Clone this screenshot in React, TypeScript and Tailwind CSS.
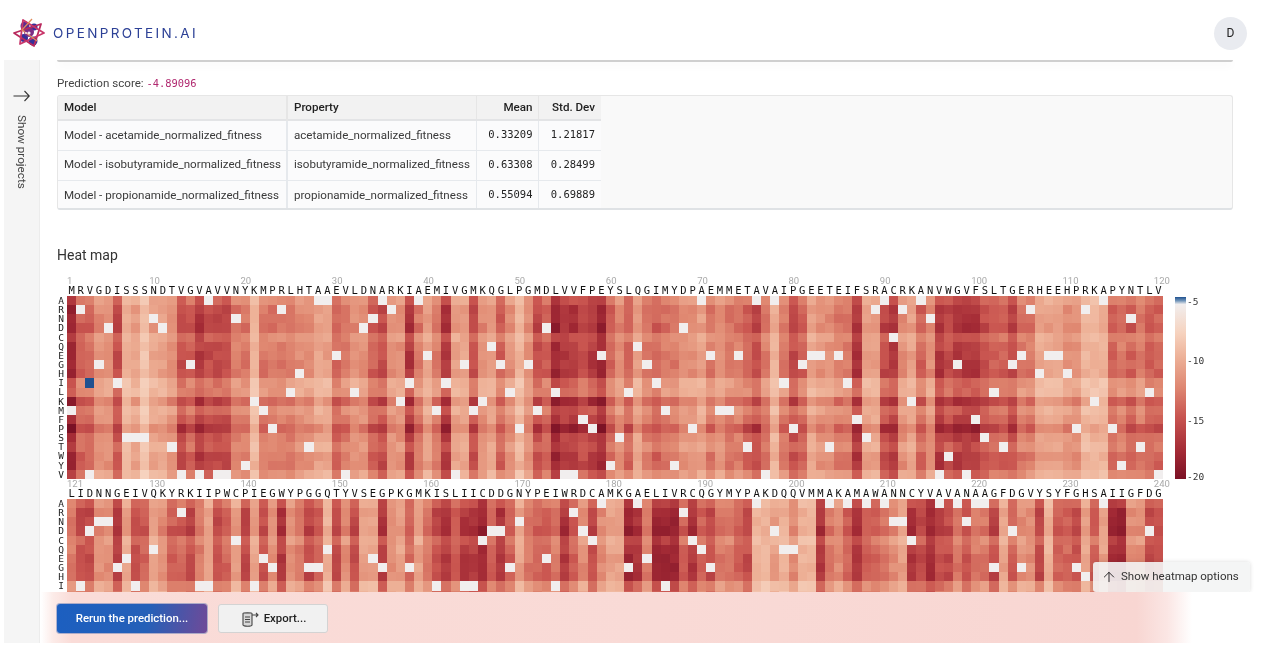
import React from 'react';
import { ArrowUp } from 'lucide-react';

const SEQ_A = 'MRVGDISSSNDTVGVAVVNYKMPRLHTAAEVLDNARKIAEMIVGMKQGLPGMDLVVFPEYSLQGIMYDPAEMMETAVAIPGEETEIFSRACRKANVWGVFSLTGERHEEHPRKAPYNTLV';
const SEQ_B = 'LIDNNGEIVQKYRKIIPWCPIEGWYPGGQTYVSEGPKGMKISLIICDDGNYPEIWRDCAMKGAELIVRCQGYMYPAKDQQVMMAKAMAWANNCYVAVANAAGFDGVYSYFGHSAIIGFDG';
const AMINO = 'ARNDCQEGHILKMFPSTWYV'.split('');

// how dark each column is, 0 to 9, read off the picture
const BASE_A = '966447231334768777552555544336544674485358337436424769887896463565544354556752576344558337843648788876675533344222656566';
const BASE_B = '577448376346675376373748457627473384363578688968635665864743398599968675567223242285468665438797757557364472667363994477';

const ROW_OFFSET = [-0.5, 0.4, 0.3, 0.7, -0.6, 0, 0.3, 0.3, 0.4, -1.4, -1.4, 0.8, -0.8, 0, 1.4, 0, -0.5, 0.3, 0.3, -1];

const WHITE_A: number[][] = [
  [16, 28, 29, 35, 39, 70, 76, 78, 90, 94, 114],
  [2, 24, 36, 89, 92, 106, 112],
  [10, 19, 34, 95, 117],
  [5, 11, 33, 53, 68],
  [91],
  [47, 63],
  [30, 40, 59, 71, 74, 82, 83, 85, 105, 108, 109],
  [4, 14, 44, 48, 51, 64, 81, 98, 104],
  [26, 107, 110],
  [6, 38, 42, 65, 79, 86],
  [25, 32, 49, 54, 62, 102, 119],
  [21, 37, 46, 93, 113],
  [1, 22, 41, 45, 52, 66, 72, 73],
  [57, 87, 100],
  [23, 50, 58, 69, 80, 111, 115],
  [7, 8, 9, 61, 88, 101],
  [12, 27, 75, 84, 103, 118],
  [97],
  [20, 60, 67, 116],
  [3, 13, 15, 17, 18, 31, 43, 55, 56, 77, 96, 99, 120],
];

const WHITE_B: number[][] = [
  [59, 63, 76, 84, 86, 88, 90, 96, 98, 100, 101, 114],
  [13, 56, 68],
  [4, 5, 50, 91, 92, 99],
  [3, 47, 48, 57, 78, 104, 119],
  [19, 46, 58, 69, 93],
  [10, 29, 70, 79, 80],
  [7, 22, 34, 53, 64],
  [6, 23, 27, 28, 35, 38, 49, 62, 71, 102, 105, 111],
  [112],
  [2, 8, 15, 16, 21, 41, 44, 45, 54, 66],
];

const STOPS = [
  [246, 210, 190],
  [238, 178, 152],
  [224, 136, 113],
  [202, 86, 80],
  [163, 42, 53],
  [123, 17, 37],
];

function shade(v: number) {
  const t = Math.max(0, Math.min(9.99, v)) / 2;
  const i = Math.floor(t);
  const f = t - i;
  const a = STOPS[i];
  const b = STOPS[i + 1];
  return `rgb(${a.map((c, k) => Math.round(c + (b[k] - c) * f)).join(',')})`;
}

function noise(row: number, col: number, seed: number) {
  const x = Math.sin(row * 127.1 + col * 311.7 + seed) * 43758.5453;
  return x - Math.floor(x);
}

const CELL_W = 1096 / 120;
const CELL_H = 183 / 20;

const HeatGrid: React.FC<{ base: string; white: number[][]; seed: number }> = ({ base, white, seed }) => (
  <svg width={1096} height={183} shapeRendering="crispEdges" className="block shrink-0">
    {AMINO.map((_, r) =>
      base.split('').map((d, c) => {
        const col = c + 1;
        const dark = Number(d);
        const v = (dark + ROW_OFFSET[r] * (0.5 + dark / 10) + (noise(r, c, seed) - 0.5) * 1.3) * 0.88;
        let fill = shade(v);
        if (white[r]?.includes(col)) fill = '#f1eeee';
        if (seed === 1 && r === 9 && col === 3) fill = '#1f5190';
        return <rect key={`${r}-${c}`} x={c * CELL_W} y={r * CELL_H} width={CELL_W + 0.5} height={CELL_H + 0.5} fill={fill} />;
      })
    )}
  </svg>
);

const SeqRuler: React.FC<{ seq: string; start: number }> = ({ seq, start }) => (
  <div className="ml-[10px] w-[1096px]">
    <div className="grid h-[10px] grid-cols-[repeat(120,minmax(0,1fr))] text-[9.5px] leading-[10px] text-[#aaaaaa]">
      {seq.split('').map((_, i) => {
        const n = start + i;
        return (
          <span key={i} className="whitespace-nowrap">
            {i === 0 || n % 10 === 0 ? n : ''}
          </span>
        );
      })}
    </div>
    <div className="grid h-[10px] grid-cols-[repeat(120,minmax(0,1fr))] font-['DejaVu_Sans_Mono',monospace] text-[10.5px] leading-[9px] text-[#111111]">
      {seq.split('').map((ch, i) => (
        <span key={i} className="text-center">
          {ch}
        </span>
      ))}
    </div>
  </div>
);

const RowLabels: React.FC<{ count: number }> = ({ count }) => (
  <div className="flex w-[10px] shrink-0 flex-col font-['DejaVu_Sans_Mono',monospace] text-[9.5px] leading-[9.15px] text-[#222222]">
    {AMINO.slice(0, count).map((a) => (
      <span key={a} className="h-[9.15px] w-[8px] text-center">
        {a}
      </span>
    ))}
  </div>
);

const Logo = () => (
  <svg width="32" height="32" viewBox="0 0 32 32" fill="none">
    <circle cx="12" cy="9" r="4.5" fill="#5a2d91" />
    <circle cx="21" cy="10" r="3.5" fill="#35309a" />
    <circle cx="11" cy="21" r="4" fill="#35309a" />
    <circle cx="20" cy="24" r="4.5" fill="#35309a" />
    <circle cx="16" cy="15" r="5" fill="#7c2d86" />
    <path d="M1 16 L28 7 L21 29 Z" stroke="#b92a5e" strokeWidth="1.8" strokeLinejoin="round" />
    <path d="M10 3 L31 16 L7 27 Z" stroke="#c8366a" strokeWidth="1.8" strokeLinejoin="round" />
    <path d="M19 2 L9 13 L24 24" stroke="#e08a5a" strokeWidth="1.3" />
    <circle cx="16" cy="16" r="1.6" fill="#f4e8f0" />
    <circle cx="13" cy="16" r="1" fill="#f4e8f0" />
  </svg>
);

const LongArrow = () => (
  <svg width="17" height="12" viewBox="0 0 17 12" fill="none" stroke="#333333" strokeWidth="1.1">
    <path d="M0.5 6h15.5M11.5 1l4.8 5-4.8 5" />
  </svg>
);

const ExportIcon = () => (
  <svg width="20" height="18" viewBox="0 0 20 18" fill="none" stroke="#444444" strokeWidth="1.1">
    <path d="M3 3.5 C3 2.5 12 2.5 12 3.5 V15 C12 16.6 3 16.6 3 15 Z" fill="#d8d8d8" />
    <path d="M5 7h5M5 9.5h5M5 12h5" />
    <path d="M12 5h6M16 3l2 2-2 2" />
  </svg>
);

const rows = [
  ['Model - acetamide_normalized_fitness', 'acetamide_normalized_fitness', '0.33209', '1.21817'],
  ['Model - isobutyramide_normalized_fitness', 'isobutyramide_normalized_fitness', '0.63308', '0.28499'],
  ['Model - propionamide_normalized_fitness', 'propionamide_normalized_fitness', '0.55094', '0.69889'],
];

export default function App() {
  return (
    <div className="relative h-[650px] w-[1272px] overflow-hidden bg-white font-[Roboto,sans-serif] text-[#333333] blur-[0.5px]">
      {/* top bar */}
      <header className="flex h-[60px] items-center justify-between pl-[13px] pr-[25px] pt-[6px]">
        <div className="flex items-center gap-[8px]">
          <Logo />
          <span className="font-[Inter,sans-serif] text-[13.5px] tracking-[0.175em] text-[#2c4096]">OPENPROTEIN.AI</span>
        </div>
        <div className="flex h-[33px] w-[33px] items-center justify-center rounded-full bg-[#e9ebf0] text-[12px] text-[#222222]">D</div>
      </header>

      <div className="relative flex h-[583px] pl-[4px]">
        {/* projects drawer */}
        <aside className="flex w-[36px] shrink-0 flex-col items-center border-r border-[#ececec] bg-[#f5f5f5] pt-[30px]">
          <LongArrow />
          <span className="mt-[13px] text-[11.7px] leading-[14px] text-[#444444] [writing-mode:vertical-rl]">Show projects</span>
        </aside>

        <main className="min-w-0 flex-1 overflow-hidden pl-[17px]">
          <div className="mr-[39px] h-[2px] rounded-b bg-[#cfcfcf] shadow-[0_3px_8px_rgba(0,0,0,0.07)]" />

          <p className="mt-[13px] text-[11.6px] leading-[16px] text-[#444444]">
            Prediction score: <span className="font-['DejaVu_Sans_Mono',monospace] text-[10.4px] text-[#b0286f]">-4.89096</span>
          </p>

          <div className="mt-[4px] mr-[39px] h-[115px] overflow-hidden rounded-[3px] border border-[#e6e6e6] border-b-2 border-b-[#dfe2e5] bg-[#f9f9f9]">
            <table className="w-[543px] table-fixed border-collapse text-[11.6px]">
              <colgroup>
                <col className="w-[229px]" />
                <col className="w-[189px]" />
                <col className="w-[62px]" />
                <col className="w-[63px]" />
              </colgroup>
              <thead>
                <tr className="h-[24px] border-b-2 border-[#e3e4e6] bg-[#f2f2f2] text-[#222222]">
                  <th className="border-r-2 border-[#e6e6e6] px-[6px] text-left font-medium">Model</th>
                  <th className="border-r border-[#e6e6e6] px-[6px] text-left font-medium">Property</th>
                  <th className="border-r border-[#e6e6e6] px-[5px] text-right font-medium">Mean</th>
                  <th className="px-[6px] text-right font-medium">Std. Dev</th>
                </tr>
              </thead>
              <tbody className="bg-[#fbfbfc]">
                {rows.map((row) => (
                  <tr key={row[0]} className="h-[30px] border-b border-[#e6e9ed] text-[#3a3a3a] last:border-b-0">
                    <td className="whitespace-nowrap border-r-2 border-[#e6e9ed] px-[6px]">{row[0]}</td>
                    <td className="whitespace-nowrap border-r border-[#e6e9ed] px-[6px]">{row[1]}</td>
                    <td className="border-r border-[#e6e9ed] px-[5px] text-right font-['DejaVu_Sans_Mono',monospace] text-[10.5px] text-[#222222]">{row[2]}</td>
                    <td className="px-[6px] text-right font-['DejaVu_Sans_Mono',monospace] text-[10.5px] text-[#222222]">{row[3]}</td>
                  </tr>
                ))}
              </tbody>
            </table>
          </div>

          <h2 className="mt-[35px] text-[14px] leading-[20px] text-[#333333]">Heat map</h2>

          {/* heat map, first 120 residues */}
          <div className="mt-[11px]">
            <SeqRuler seq={SEQ_A} start={1} />
            <div className="flex">
              <RowLabels count={20} />
              <HeatGrid base={BASE_A} white={WHITE_A} seed={1} />
              <div className="ml-[12px] flex h-[183px] items-start gap-px">
                <div className="mt-px h-[182px] w-[11px] bg-[linear-gradient(to_bottom,#1f5190_0%,#6f93b8_2%,#f1eeee_4%,#f6d2be_20%,#edb198_33%,#de8671_50%,#c85450_66%,#a32a35_85%,#7b1125_100%)]" />
                <div className="flex flex-col font-['DejaVu_Sans_Mono',monospace] text-[9.5px] leading-[10px] text-[#333333]">
                  <span className="mt-[1px]">-5</span>
                  <span className="mt-[49px]">-10</span>
                  <span className="mt-[50px]">-15</span>
                  <span className="mt-[46px]">-20</span>
                </div>
              </div>
            </div>
          </div>

          {/* next 120 residues, runs on under the action bar */}
          <div>
            <SeqRuler seq={SEQ_B} start={121} />
            <div className="flex">
              <RowLabels count={10} />
              <HeatGrid base={BASE_B} white={WHITE_B} seed={2} />
            </div>
          </div>
        </main>

        <button className="absolute left-[1093px] top-[502px] flex h-[30px] w-[157px] items-center gap-[4px] rounded-[3px] bg-[#f3f4f4]/90 pl-[8px] text-[11.5px] text-[#333333] shadow-[0_0_4px_rgba(0,0,0,0.15)]">
          <ArrowUp size={16} strokeWidth={1.4} className="text-[#222222]" />
          Show heatmap options
        </button>

        {/* sticky action bar, the frosted look is a flat gradient */}
        <div className="absolute bottom-0 left-[41px] right-0 flex h-[51px] items-start gap-[11px] bg-[linear-gradient(to_right,#ffffff_0%,#fcebe8_1%,#fadcd8_2.5%,#f9dad6_50%,#f8d6d2_89%,#fbe6e4_91.5%,#ffffff_93.5%)] pl-[16px] pt-[12px]">
          <button className="h-[29px] w-[150px] rounded-[3px] bg-[linear-gradient(100deg,#1c5fc0_0%,#2560b8_60%,#6f4a98_100%)] text-[11.4px] font-medium text-white shadow-[0_0_0_1px_rgba(30,80,170,0.35)]">
            Rerun the prediction...
          </button>
          <button className="flex h-[29px] w-[110px] items-center justify-center gap-[4px] rounded-[3px] border border-[#d3d3d3] bg-[#f1f1f1] text-[11.4px] font-medium text-[#222222]">
            <ExportIcon />
            Export...
          </button>
        </div>
      </div>
    </div>
  );
}
